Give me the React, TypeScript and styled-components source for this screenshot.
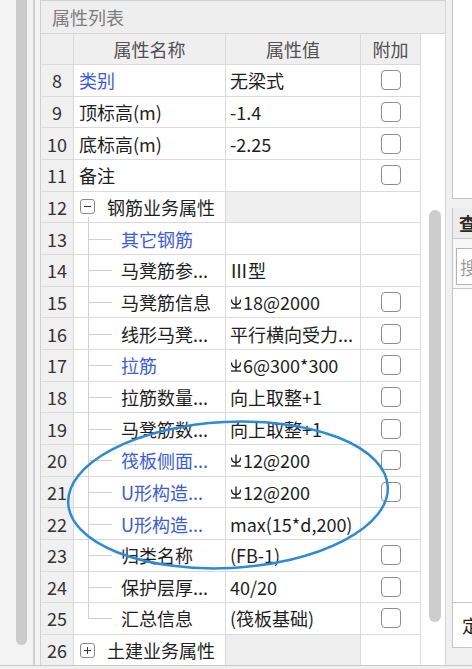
import React from 'react';
import styled, { createGlobalStyle } from 'styled-components';

type Branch = 'none' | 'mid' | 'last';

interface PropRow {
    no: number;
    name: string;
    value?: string;
    rebar?: boolean;
    blue?: boolean;
    branch?: Branch;
    check?: boolean;
    group?: 'open' | 'closed';
}

const rows: PropRow[] = [
    { no: 8, name: '类别', value: '无梁式', blue: true, check: true },
    { no: 9, name: '顶标高(m)', value: '-1.4', check: true },
    { no: 10, name: '底标高(m)', value: '-2.25', check: true },
    { no: 11, name: '备注', check: true },
    { no: 12, name: '钢筋业务属性', group: 'open' },
    { no: 13, name: '其它钢筋', blue: true, branch: 'mid' },
    { no: 14, name: '马凳筋参...', value: 'Ⅲ型', branch: 'mid' },
    { no: 15, name: '马凳筋信息', value: '18@2000', rebar: true, branch: 'mid', check: true },
    { no: 16, name: '线形马凳...', value: '平行横向受力...', branch: 'mid', check: true },
    { no: 17, name: '拉筋', value: '6@300*300', rebar: true, blue: true, branch: 'mid', check: true },
    { no: 18, name: '拉筋数量...', value: '向上取整+1', branch: 'mid', check: true },
    { no: 19, name: '马凳筋数...', value: '向上取整+1', branch: 'mid', check: true },
    { no: 20, name: '筏板侧面...', value: '12@200', rebar: true, blue: true, branch: 'mid', check: true },
    { no: 21, name: 'U形构造...', value: '12@200', rebar: true, blue: true, branch: 'mid', check: true },
    { no: 22, name: 'U形构造...', value: 'max(15*d,200)', blue: true, branch: 'mid' },
    { no: 23, name: '归类名称', value: '(FB-1)', branch: 'mid', check: true },
    { no: 24, name: '保护层厚...', value: '40/20', branch: 'mid', check: true },
    { no: 25, name: '汇总信息', value: '(筏板基础)', branch: 'last', check: true },
    { no: 26, name: '土建业务属性', group: 'closed' },
];

const GlobalStyle = createGlobalStyle`
    html, body {
        margin: 0;
        padding: 0;
    }
    body {
        width: 472px;
        height: 669px;
        overflow: hidden;
        background: #f0f0f0;
        font-family: "Noto Sans CJK SC", "Noto Sans", sans-serif;
        color: #1e1e1e;
    }
`;

const Page = styled.div`
    position: relative;
    width: 472px;
    height: 669px;
    display: flex;
    flex-direction: column;
    overflow: hidden;
`;

const Workspace = styled.div`
    display: flex;
    height: 665px;
    overflow: hidden;
`;

const BottomEdge = styled.div`
    flex: 1;
    border-top: 1px solid #c9c9c9;
    background: #f0f0f0;
`;

const LeftStrip = styled.div`
    flex: none;
    width: 35px;
    box-sizing: border-box;
    padding-left: 16px;
    background: #f3f3f3;
    border-right: 2px solid #d0d0d0;
`;

const StripThumb = styled.div`
    width: 11px;
    height: 651px;
    margin-top: -6px;
    border-radius: 6px;
    background: #cbcbcb;
`;

const Spacer = styled.div`
    flex: none;
    width: 5px;
    background: #f3f3f3;
    border-right: 1px solid #cfcfcf;
`;

const PropPanel = styled.section`
    flex: none;
    width: 404px;
    display: flex;
    flex-direction: column;
    background: #fff;
    border-top: 1px solid #d2d2d2;
    border-right: 1px solid #d6d6d6;
`;

const TitleBar = styled.div`
    height: 32px;
    flex: none;
    display: flex;
    align-items: center;
    padding-left: 11px;
    background: #eeeeee;
    border-bottom: 1px solid #d6d6d6;
    color: #7c7c7c;
    font-size: 18px;
`;

const PanelBody = styled.div`
    flex: 1;
    display: flex;
    overflow: hidden;
`;

const Grid = styled.div`
    flex: none;
    width: 380px;
    display: flex;
    flex-direction: column;
`;

const Row = styled.div<{ $head?: boolean }>`
    flex: none;
    display: grid;
    grid-template-columns: 33px 152px 135px 60px;
    height: ${p => (p.$head ? '31px' : '31.67px')};
    box-sizing: border-box;
    border-bottom: 1px solid #dadada;
    font-size: 18px;
`;

const Cell = styled.div`
    display: flex;
    align-items: center;
    min-width: 0;
    white-space: nowrap;
    overflow: hidden;
    border-right: 1px solid #dadada;
`;

const HeadCell = styled(Cell)`
    justify-content: center;
    background: #efefef;
    color: #505050;
`;

const NumCell = styled(Cell)`
    justify-content: center;
    background: #f0f0f0;
    color: #333;
`;

const NameCell = styled(Cell)<{ $blue?: boolean; $branch: Branch }>`
    position: relative;
    padding-left: ${p => (p.$branch === 'none' ? '5px' : '47px')};
    color: ${p => (p.$blue ? '#3a5be9' : '#1e1e1e')};

    &::before {
        content: '';
        display: ${p => (p.$branch === 'none' ? 'none' : 'block')};
        position: absolute;
        left: 14px;
        top: 0;
        width: 1px;
        height: ${p => (p.$branch === 'last' ? '50%' : '100%')};
        background: #cfcfcf;
    }

    &::after {
        content: '';
        display: ${p => (p.$branch === 'none' ? 'none' : 'block')};
        position: absolute;
        left: 14px;
        top: 50%;
        width: 24px;
        height: 1px;
        background: #cfcfcf;
    }
`;

const GroupCell = styled(Cell)<{ $open?: boolean }>`
    position: relative;
    gap: 12px;
    padding-left: 6px;

    &::after {
        content: '';
        display: ${p => (p.$open ? 'block' : 'none')};
        position: absolute;
        left: 14px;
        top: 25px;
        bottom: 0;
        width: 1px;
        background: #cfcfcf;
    }
`;

const Toggle = styled.span<{ $open?: boolean }>`
    position: relative;
    flex: none;
    width: 15px;
    height: 15px;
    box-sizing: border-box;
    border: 1px solid #8a8a8a;
    border-radius: 3px;

    &::before {
        content: '';
        position: absolute;
        left: 3px;
        top: 6px;
        width: 7px;
        height: 1px;
        background: #333;
    }

    &::after {
        content: '';
        display: ${p => (p.$open ? 'none' : 'block')};
        position: absolute;
        left: 6px;
        top: 3px;
        width: 1px;
        height: 7px;
        background: #333;
    }
`;

const ValueCell = styled(Cell)<{ $shaded?: boolean }>`
    padding-left: 4px;
    background: ${p => (p.$shaded ? '#efefef' : '#fff')};
`;

const AddCell = styled(Cell)`
    justify-content: center;
`;

const CheckBox = styled.span`
    width: 20px;
    height: 20px;
    box-sizing: border-box;
    border: 1.5px solid #8c8c8c;
    border-radius: 4px;
    background: #fff;
`;

const RebarSvg = styled.svg`
    flex: none;
    width: 12px;
    height: 16px;
    margin-right: 1px;
`;

const ScrollTrack = styled.div`
    flex: 1;
    padding: 176px 0 0 8px;
    background: #fff;
`;

const ScrollThumb = styled.div`
    width: 12px;
    height: 412px;
    border-radius: 6px;
    background: #cdcdcd;
`;

const Gutter = styled.div`
    flex: none;
    width: 6px;
    background: #f0f0f0;
`;

const SidePanel = styled.aside`
    flex: 1;
    min-width: 0;
    display: flex;
    flex-direction: column;
`;

const SideTopBox = styled.div`
    flex: none;
    height: 199px;
    box-sizing: border-box;
    background: #fff;
    border-left: 1px solid #c4c4c4;
    border-bottom: 1px solid #c4c4c4;
`;

const Finder = styled.div`
    flex: none;
    margin-top: 9px;
    height: 440px;
    display: flex;
    flex-direction: column;
    box-sizing: border-box;
    border-left: 1px solid #c4c4c4;
    border-bottom: 1px solid #c4c4c4;
    overflow: hidden;
    font-size: 18px;
    white-space: nowrap;
`;

const FinderHead = styled.div`
    flex: none;
    height: 30px;
    display: flex;
    align-items: center;
    padding-left: 6px;
    background: #ececec;
    color: #2a2a2a;
    font-weight: 700;
`;

const SearchWrap = styled.div`
    flex: none;
    height: 50px;
    box-sizing: border-box;
    padding: 9px 0 3px 3px;
    background: #f7f7f7;
    border-top: 1px solid #c8c8c8;
`;

const SearchInput = styled.div`
    height: 100%;
    box-sizing: border-box;
    display: flex;
    align-items: center;
    padding-left: 3px;
    background: #fff;
    border: 1px solid #b4b4b4;
    border-right: none;
    color: #9c9c9c;
`;

const FinderList = styled.div`
    flex: 1;
    background: #fff;
    border-top: 1px solid #c8c8c8;
`;

const FinderFoot = styled.div`
    flex: none;
    height: 45px;
    box-sizing: border-box;
    display: flex;
    align-items: center;
    padding-left: 9px;
    background: #fff;
    border-top: 1px solid #c8c8c8;
`;

const Annotation = styled.svg`
    position: absolute;
    left: 0;
    top: 0;
    width: 472px;
    height: 669px;
    pointer-events: none;
`;

const RebarMark: React.FC = () => (
    <RebarSvg viewBox="0 0 12 16" fill="none" stroke="#1e1e1e" strokeWidth="1.3">
        <path d="M6 2.5V14" />
        <path d="M1.5 5.5C1.5 9.5 3.5 10.5 6 10.5C8.5 10.5 10.5 9.5 10.5 5.5" />
        <path d="M1 14H11" />
    </RebarSvg>
);

const PropertyRow: React.FC<{ row: PropRow }> = ({ row }) => {
    if (row.group) {
        const open = row.group === 'open';
        return (
            <Row>
                <NumCell>{row.no}</NumCell>
                <GroupCell $open={open}>
                    <Toggle $open={open} />
                    {row.name}
                </GroupCell>
                <ValueCell $shaded />
                <AddCell />
            </Row>
        );
    }
    return (
        <Row>
            <NumCell>{row.no}</NumCell>
            <NameCell $blue={row.blue} $branch={row.branch || 'none'}>
                {row.name}
            </NameCell>
            <ValueCell>
                {row.rebar && <RebarMark />}
                {row.value}
            </ValueCell>
            <AddCell>{row.check && <CheckBox />}</AddCell>
        </Row>
    );
};

const App: React.FC = () => (
    <>
        <GlobalStyle />
        <Page>
            <Workspace>
                <LeftStrip>
                    <StripThumb />
                </LeftStrip>
                <Spacer />
                <PropPanel>
                    <TitleBar>属性列表</TitleBar>
                    <PanelBody>
                        <Grid>
                            <Row $head>
                                <HeadCell />
                                <HeadCell>属性名称</HeadCell>
                                <HeadCell>属性值</HeadCell>
                                <HeadCell>附加</HeadCell>
                            </Row>
                            {rows.map(r => (
                                <PropertyRow key={r.no} row={r} />
                            ))}
                        </Grid>
                        <ScrollTrack>
                            <ScrollThumb />
                        </ScrollTrack>
                    </PanelBody>
                </PropPanel>
                <Gutter />
                <SidePanel>
                    <SideTopBox />
                    <Finder>
                        <FinderHead>查</FinderHead>
                        <SearchWrap>
                            <SearchInput>搜</SearchInput>
                        </SearchWrap>
                        <FinderList />
                        <FinderFoot>定</FinderFoot>
                    </Finder>
                </SidePanel>
            </Workspace>
            <BottomEdge />
            <Annotation viewBox="0 0 472 669">
                <ellipse
                    cx="228"
                    cy="495"
                    rx="160"
                    ry="73"
                    transform="rotate(-3 228 495)"
                    fill="none"
                    stroke="#2d8ad9"
                    strokeWidth="2.5"
                />
            </Annotation>
        </Page>
    </>
);

export default App;
